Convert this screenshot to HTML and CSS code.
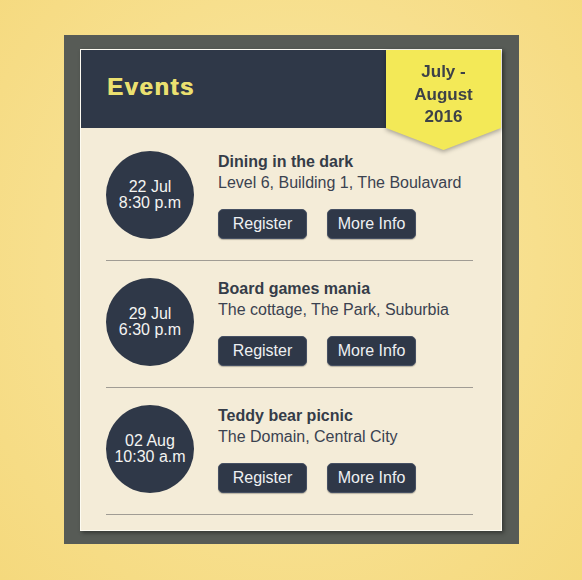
FILE: index.html
```html
<!DOCTYPE html>
<html>
<head>
<meta charset="utf-8">
<link rel="stylesheet" href="styles.css">
</head>
<body>
<div class="frame">
  <div class="card">
    <div class="header">
      <h1 class="title">Events</h1>
      <div class="banner-wrap">
        <div class="banner">July -<br>August<br>2016</div>
      </div>
    </div>
    <div class="list">
      <div class="event">
        <div class="date">22 Jul<br>8:30 p.m</div>
        <div class="info">
          <div class="name">Dining in the dark</div>
          <div class="place">Level 6, Building 1, The Boulavard</div>
          <div class="actions"><button class="btn">Register</button><button class="btn">More Info</button></div>
        </div>
      </div>
      <div class="event">
        <div class="date">29 Jul<br>6:30 p.m</div>
        <div class="info">
          <div class="name">Board games mania</div>
          <div class="place">The cottage, The Park, Suburbia</div>
          <div class="actions"><button class="btn">Register</button><button class="btn">More Info</button></div>
        </div>
      </div>
      <div class="event">
        <div class="date">02 Aug<br>10:30 a.m</div>
        <div class="info">
          <div class="name">Teddy bear picnic</div>
          <div class="place">The Domain, Central City</div>
          <div class="actions"><button class="btn">Register</button><button class="btn">More Info</button></div>
        </div>
      </div>
    </div>
  </div>
</div>
</body>
</html>
```
FILE: styles.css
```css
html, body {
  margin: 0;
  padding: 0;
}
body {
  width: 582px;
  height: 580px;
  overflow: hidden;
  background: radial-gradient(ellipse at 50% 45%, #f9e8a6 0%, #f7df8d 60%, #f5d97d 100%);
  font-family: "Liberation Sans", Arial, sans-serif;
  padding-top: 35px;
  box-sizing: border-box;
}
.frame {
  margin-left: 64px;
  width: 455px;
  box-sizing: border-box;
  padding: 14px 17px 13px 16px;
  background: #575b56;
}
.card {
  width: 422px;
  box-sizing: border-box;
  border: 1px solid #fdfbf2;
  background: #f4ecd8;
  box-shadow: 2px 2px 4px rgba(0, 0, 0, 0.4);
  position: relative;
}
.header {
  height: 78px;
  background: #2f3848;
  display: flex;
  align-items: center;
  padding: 0 0 5px 26px;
  box-sizing: border-box;
  position: relative;
}
.title {
  margin: 0;
  font-size: 24px;
  font-weight: bold;
  letter-spacing: 1.5px;
  color: #ebe070;
  text-shadow: 0.6px 0 0 #ebe070;
}
.banner-wrap {
  position: absolute;
  top: 0;
  right: 0;
  width: 115px;
  height: 100px;
  filter: drop-shadow(0 2px 2px rgba(0, 0, 0, 0.3));
}
.banner {
  width: 100%;
  height: 100%;
  box-sizing: border-box;
  padding-top: 11px;
  background: #f3e957;
  clip-path: polygon(0 0, 100% 0, 100% 78px, 50% 100%, 0 78px);
  text-align: center;
  font-size: 17px;
  line-height: 22.5px;
  font-weight: bold;
  color: #3d4148;
}
.list {
  padding: 6px 28px 15px 25px;
}
.event {
  display: flex;
  align-items: flex-start;
  gap: 24px;
  padding: 17px 0 21px;
  border-bottom: 1px solid #a09c94;
}
.date {
  width: 88px;
  height: 88px;
  border-radius: 50%;
  background: #2f3848;
  color: #f4f4f2;
  font-size: 16px;
  line-height: 16px;
  display: flex;
  align-items: center;
  justify-content: center;
  text-align: center;
  flex: none;
}
.info {
  display: flex;
  flex-direction: column;
  color: #353c48;
  font-size: 16px;
  line-height: 21px;
}
.name {
  font-weight: bold;
}
.place {
  color: #3b4250;
}
.actions {
  display: flex;
  gap: 20px;
  margin-top: 16px;
}
.btn {
  width: 89px;
  height: 30px;
  border-radius: 5px;
  border: 1px solid #465063;
  background: #2f3848;
  color: #eef0f2;
  font-family: "Liberation Sans", Arial, sans-serif;
  font-size: 16px;
  padding: 0;
  box-shadow: 0 1px 1px rgba(0, 0, 0, 0.25);
}
```
